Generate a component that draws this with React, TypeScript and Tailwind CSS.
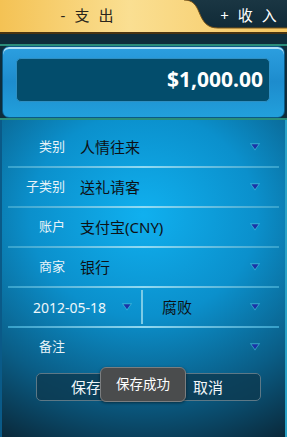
import React from "react";

const FONT = { fontFamily: '"Noto Sans", "Noto Sans CJK SC", sans-serif' };

function Chevron() {
  return (
    <svg width="12" height="10" viewBox="0 0 12 10" className="shrink-0">
      <path d="M0.8 1.2 L11.2 1.2 L6 8.6 Z" fill="#4cc0dc" opacity="0.7" />
      <path d="M2.4 2.2 L9.6 2.2 L6 7.2 Z" fill="#1b33a6" />
    </svg>
  );
}

function Divider() {
  return <div className="h-[2px] mx-[6px] bg-gradient-to-r from-[#3aa6cf] via-[#9fe0f4] to-[#3aa6cf] opacity-90" />;
}

function Row({ label, value }: { label: string; value: string }) {
  return (
    <>
      <div className="h-[38px] flex items-center">
        <span className="w-[63px] text-right text-[13px] text-[#e8f3f8]">{label}</span>
        <span className="ml-[15px] flex-1 text-[15px] text-[#0d1115]">{value}</span>
        <span className="mr-[24px]">
          <Chevron />
        </span>
      </div>
      <Divider />
    </>
  );
}

export default function App() {
  return (
    <div className="w-[287px] h-[437px] flex flex-col bg-[#0f2f3e] overflow-hidden" style={FONT}>
      {/* tab header */}
      <div className="relative h-[34px] shrink-0">
        <svg className="absolute inset-0" width="287" height="34" viewBox="0 0 287 34">
          <defs>
            <linearGradient id="yel" x1="0" y1="0" x2="1" y2="0">
              <stop offset="0" stopColor="#f4c254" />
              <stop offset="0.45" stopColor="#fadf92" />
              <stop offset="1" stopColor="#f6c760" />
            </linearGradient>
            <linearGradient id="dk" x1="0" y1="0" x2="0" y2="1">
              <stop offset="0" stopColor="#1a3643" />
              <stop offset="1" stopColor="#102a37" />
            </linearGradient>
          </defs>
          <rect x="0" y="0" width="287" height="33" fill="url(#yel)" />
          <path d="M184 0 C193 0 196 5 199 12 C203 22 207 28 218 28 L287 28 L287 0 Z" fill="url(#dk)" />
          <path d="M184 0 C193 0 196 5 199 12 C203 22 207 28 218 28 L287 28" fill="none" stroke="#7a5418" strokeWidth="1" />
          <rect x="0" y="32" width="287" height="2" fill="#4a3410" />
        </svg>
        <div className="relative h-full flex items-center justify-between pb-[3px]">
          <div className="w-[174px] flex justify-center items-center gap-[9px] text-[15px] text-[#2a261c]">
            <span>-</span>
            <span>支</span>
            <span>出</span>
          </div>
          <div className="w-[77px] flex justify-center items-center gap-[9px] text-[15px] text-white">
            <span>+</span>
            <span>收</span>
            <span>入</span>
          </div>
        </div>
      </div>

      {/* dark gap + green line */}
      <div className="h-[10px] shrink-0 bg-[#0e2d3b]" />
      <div className="h-[2px] shrink-0 bg-[#2a8d7a]" />

      {/* amount box */}
      <div className="px-[2px] shrink-0 bg-[#0e2d3b]">
        <div className="h-[72px] rounded-[7px] border border-[#0a5a86] bg-gradient-to-b from-[#2c9fe0] via-[#1d8ccd] to-[#22a0dc] shadow-[inset_0_2px_0_rgba(220,245,255,0.75)] pt-[11px] pl-[13px] pr-[14px]">
          <div className="h-[44px] rounded-[5px] bg-[#034d6c] border border-[#2f8fc2] flex items-center justify-end pr-[6px]">
            <span className="text-[21px] font-bold text-white">$1,000.00</span>
          </div>
        </div>
      </div>
      <div className="h-[2px] shrink-0 bg-[#2a8d7a]" />

      {/* form panel */}
      <div className="relative flex-1 border-l-2 border-l-[#0a5a88] border-r-2 border-r-[#2aa3c8] bg-[radial-gradient(ellipse_100%_80%_at_50%_30%,#10b0ef_0%,#0b90cc_40%,#0a5d86_72%,#0a2a3c_100%)] pt-[8px]">
        <Row label="类别" value="人情往来" />
        <Row label="子类别" value="送礼请客" />
        <Row label="账户" value="支付宝(CNY)" />
        <Row label="商家" value="银行" />

        <div className="h-[38px] flex items-center">
          <div className="w-[139px] flex items-center">
            <span className="ml-[31px] text-[14px] text-[#eef6fa]">2012-05-18</span>
            <span className="ml-auto mr-[8px]">
              <Chevron />
            </span>
          </div>
          <div className="w-[2px] self-stretch my-[2px] bg-[#7ccbe6]" />
          <span className="ml-[19px] flex-1 text-[15px] text-[#0d1115]">腐败</span>
          <span className="mr-[24px]">
            <Chevron />
          </span>
        </div>
        <Divider />

        <div className="h-[38px] flex items-center">
          <span className="w-[63px] text-right text-[13px] text-[#e8f3f8]">备注</span>
          <span className="flex-1" />
          <span className="mr-[24px]">
            <Chevron />
          </span>
        </div>

        <div className="mt-[7px] ml-[34px] w-[225px] h-[28px] rounded-[5px] border border-[#5d7886] bg-[#0d3a50]/80 flex items-center justify-between pl-[34px] pr-[37px] text-[15px] text-[#f2f6f8]">
          <span>保存</span>
          <span>取消</span>
        </div>

        {/* toast */}
        <div className="absolute left-[98px] top-[247px] w-[86px] h-[35px] rounded-[6px] border border-[#7b7e80] bg-[#4a4c4d] flex items-center justify-center text-[13.5px] text-white shadow-[0_1px_3px_rgba(0,0,0,0.5)]">
          保存成功
        </div>
      </div>
    </div>
  );
}
